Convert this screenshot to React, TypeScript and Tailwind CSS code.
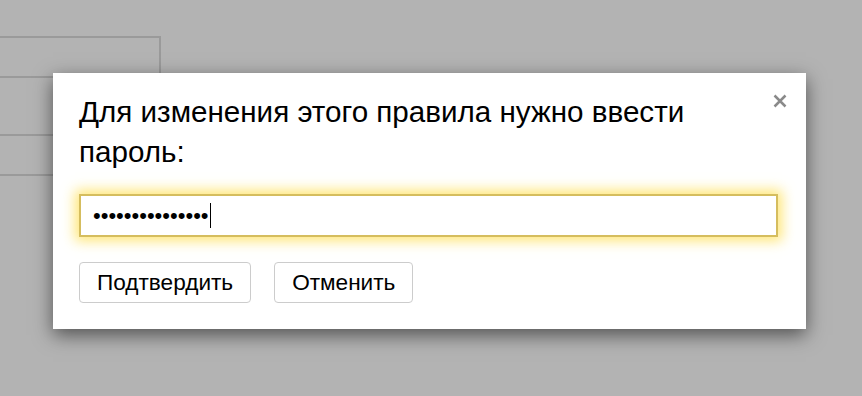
import { useState } from "react";

// Сколько символов в пароле (точки рисуем сами)
const PAROL = "секретныйпарол";

const PasswordModal = ({ onClose }: { onClose: () => void }) => {
  const [parol] = useState(PAROL + "1");

  return (
    <div className="absolute left-[53px] top-[73px] w-[753px] h-[256px] bg-white shadow-[0_6px_18px_rgba(0,0,0,0.55)] px-[26px] pt-[19px]">
      {/* крестик */}
      <button
        onClick={onClose}
        className="absolute right-[18px] top-[20px] w-[16px] h-[16px] flex items-center justify-center"
      >
        <svg width="14" height="14" viewBox="0 0 14 14">
          <path d="M1.5 1.5 L12.5 12.5 M12.5 1.5 L1.5 12.5" stroke="#8a8a8a" strokeWidth="2.5" />
        </svg>
      </button>

      <p className="text-[29.6px] leading-[40px] text-black pr-[60px]">
        Для изменения этого правила нужно ввести пароль:
      </p>

      {/* поле пароля */}
      <div
        role="textbox"
        className="mt-[22px] w-[699px] h-[43px] border-2 border-[#d5bd5e] shadow-[0_0_12px_4px_rgba(255,214,30,0.6)] flex items-center pl-[12px]"
      >
        <span className="text-[22px] leading-none">
          {"•".repeat(parol.length)}
        </span>
        <span className="w-px h-[25px] bg-black ml-[1px]" />
      </div>

      {/* кнопки */}
      <div className="flex gap-[23px] mt-[25px]">
        <button className="h-[41px] px-[17px] border-[1.5px] border-[#cccccc] rounded-[4px] text-[22.6px] text-black bg-white">
          Подтвердить
        </button>
        <button className="h-[41px] px-[17px] border-[1.5px] border-[#cccccc] rounded-[4px] text-[22.6px] text-black bg-white">
          Отменить
        </button>
      </div>
    </div>
  );
};

const App = () => {
  const [abierto, setAbierto] = useState(true);

  return (
    <div
      className="relative w-[862px] h-[396px] overflow-hidden bg-[#b3b3b3]"
      style={{ fontFamily: '"Liberation Sans", Arial, sans-serif' }}
    >
      {/* таблица под затемнением */}
      <div className="mt-[36px] w-[161px] border-t-2 border-r-2 border-[#9a9a9a]">
        <div className="h-[40px] border-b-2 border-[#9a9a9a]" />
        <div className="h-[58px] border-b-2 border-[#9a9a9a]" />
        <div className="h-[40px] border-b-2 border-[#9a9a9a]" />
        <div className="h-[120px]" />
      </div>

      {abierto && <PasswordModal onClose={() => setAbierto(false)} />}
    </div>
  );
};

export default App;
